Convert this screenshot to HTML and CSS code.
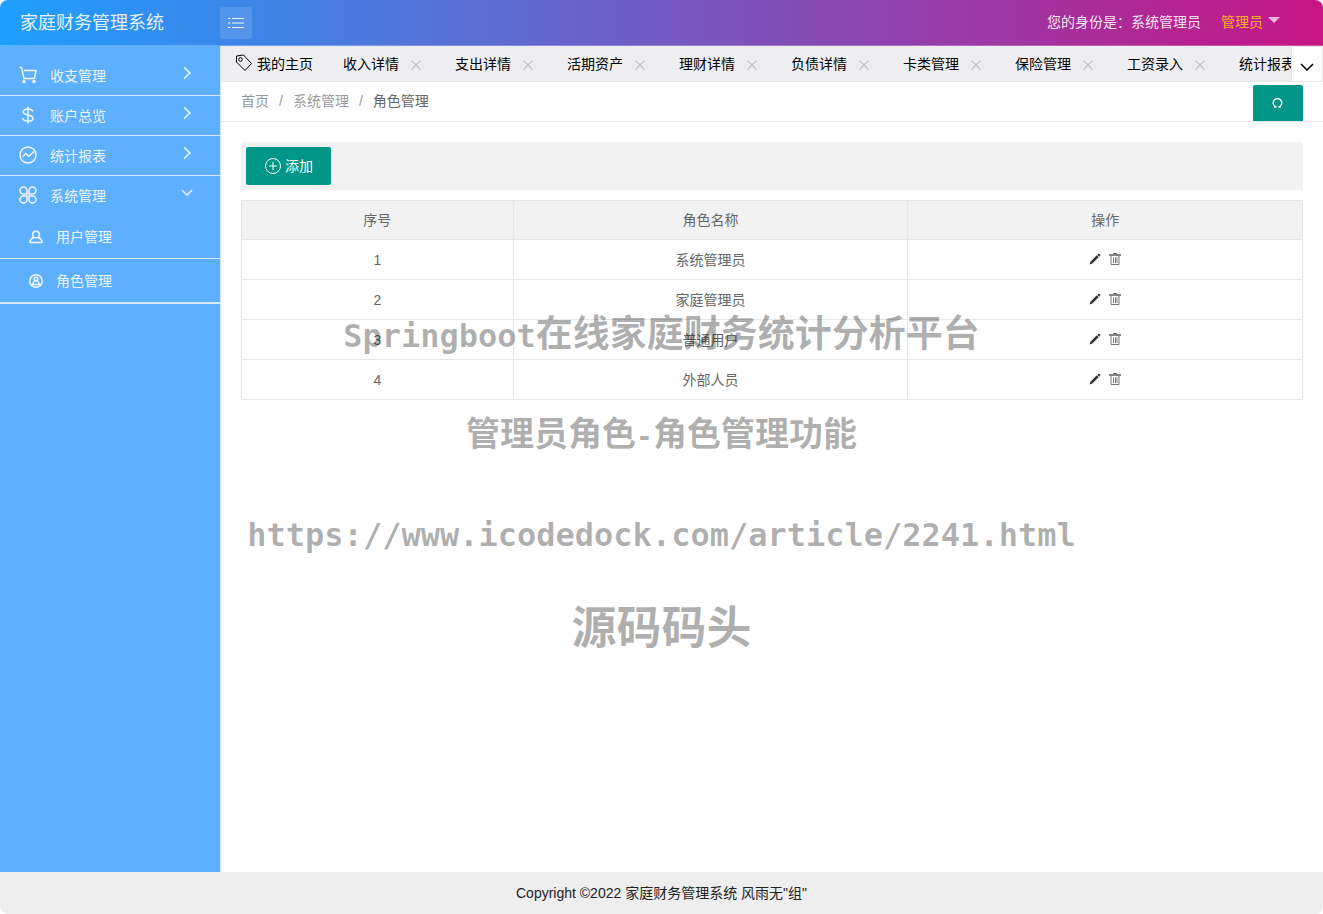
FILE: index.html
```html
<!DOCTYPE html>
<html lang="zh-CN">
<head>
<meta charset="utf-8">
<title>家庭财务管理系统</title>
<link rel="stylesheet" href="styles.css">
</head>
<body>
<svg class="sprite" aria-hidden="true">
  <symbol id="close" viewBox="0 0 10 10"><path d="M0.500 0.500l9 9M9.500 0.500l-9 9"/></symbol>
  <symbol id="right" viewBox="0 0 12 12"><path d="M3 0.500l6 5.500-6 5.500"/></symbol>
  <symbol id="down" viewBox="0 0 14 8"><path d="M1 1l6 6 6-6"/></symbol>
  <symbol id="pencil" viewBox="0 0 12 12"><path d="M0.500 11.500l1-2.800 6.300-6.400 1.900 1.900-6.400 6.300zM8.300 1.800l.9-.9q.6-.5 1.200 0l.7.7q.5.6 0 1.200l-.9.900z"/></symbol>
  <symbol id="trash" viewBox="0 0 12 12"><path d="M0 2h12" stroke-width="1.600"/><path d="M4 0.500h4M2 3v8.500h8V3M4.500 4.500V10M6.500 4.500V10M8 4.500V10" stroke-width=".9"/></symbol>
</svg>

<header class="header">
  <h1 class="brand">家庭财务管理系统</h1>
  <button class="toggle" type="button" aria-label="折叠菜单">
    <svg width="18" height="12" viewBox="0 0 18 12"><path d="M1 1.500h2.500M5 1.500h12M1 6h2.500M5 6h12M1 10.500h2.500M5 10.500h12"/></svg>
  </button>
  <div class="identity">您的身份是：系统管理员</div>
  <a class="account" href="#">管理员<span class="caret"></span></a>
</header>

<div class="body">
  <nav class="side">
    <a class="item" href="#">
      <svg class="item-icon" viewBox="0 0 18 18"><path d="M0.500 1.500h2l2.500 11h10.500M5 4.500H17l-1.500 8"/><circle cx="5" cy="15.500" r="1"/><circle cx="15" cy="15.500" r="1"/></svg>
      <span>收支管理</span><svg class="arrow"><use href="#right"/></svg>
    </a>
    <a class="item" href="#">
      <svg class="item-icon" viewBox="0 0 18 18"><path d="M14 5.500Q13 3 9 3T4.200 5.800Q4.200 8 9 9t5 3.400Q14 15 9 15t-5.200-3M9 0.500v17"/></svg>
      <span>账户总览</span><svg class="arrow"><use href="#right"/></svg>
    </a>
    <a class="item" href="#">
      <svg class="item-icon" viewBox="0 0 18 18"><circle cx="9" cy="9" r="8"/><path d="M3.500 11l3.300-3.500 3 3 5-5"/></svg>
      <span>统计报表</span><svg class="arrow"><use href="#right"/></svg>
    </a>
    <a class="item item-open" href="#">
      <svg class="item-icon" viewBox="0 0 18 18"><path d="M8 8H4.500A3.500 3.500 0 1 1 8 4.500zM10 8V4.500A3.500 3.500 0 1 1 13.500 8zM8 10v3.500A3.500 3.500 0 1 1 4.500 10zM10 10h3.500a3.500 3.500 0 1 1-3.500 3.500z"/></svg>
      <span>系统管理</span><svg class="arrow arrow-down"><use href="#down"/></svg>
    </a>
    <div class="sub">
      <a class="subitem" href="#">
        <svg class="sub-icon" viewBox="0 0 14 14"><circle cx="7" cy="4.500" r="3.300"/><path d="M5 7.200Q1 9 1 12.500h12Q13 9 9 7.200"/></svg>
        <span>用户管理</span>
      </a>
      <a class="subitem" href="#">
        <svg class="sub-icon" viewBox="0 0 14 14"><circle cx="7" cy="7" r="6.200"/><circle cx="7" cy="5" r="1.800"/><path d="M6 6.500Q4 8 3.800 10.500h6.400Q10 8 8 6.500"/></svg>
        <span>角色管理</span>
      </a>
    </div>
  </nav>

  <main class="main">
    <div class="tabs">
      <div class="tablist">
        <div class="tab tab-home">
          <svg class="tag" viewBox="0 0 18 18"><path d="M1.500 2L8.500 1l8 8.500-6.500 7L1.500 8z"/><circle cx="5.500" cy="5.500" r="1.800"/></svg>
          <a href="#">我的主页</a>
        </div>
        <div class="tab"><a href="#">收入详情</a><button class="close" type="button" aria-label="关闭"><svg><use href="#close"/></svg></button></div>
        <div class="tab"><a href="#">支出详情</a><button class="close" type="button" aria-label="关闭"><svg><use href="#close"/></svg></button></div>
        <div class="tab"><a href="#">活期资产</a><button class="close" type="button" aria-label="关闭"><svg><use href="#close"/></svg></button></div>
        <div class="tab"><a href="#">理财详情</a><button class="close" type="button" aria-label="关闭"><svg><use href="#close"/></svg></button></div>
        <div class="tab"><a href="#">负债详情</a><button class="close" type="button" aria-label="关闭"><svg><use href="#close"/></svg></button></div>
        <div class="tab"><a href="#">卡类管理</a><button class="close" type="button" aria-label="关闭"><svg><use href="#close"/></svg></button></div>
        <div class="tab"><a href="#">保险管理</a><button class="close" type="button" aria-label="关闭"><svg><use href="#close"/></svg></button></div>
        <div class="tab"><a href="#">工资录入</a><button class="close" type="button" aria-label="关闭"><svg><use href="#close"/></svg></button></div>
        <div class="tab"><a href="#">统计报表</a></div>
      </div>
      <button class="more" type="button" aria-label="更多标签"><svg><use href="#down"/></svg></button>
    </div>

    <div class="crumbbar">
      <nav class="crumbs">
        <a href="#">首页</a><span>/</span><a href="#">系统管理</a><span>/</span><span class="current">角色管理</span>
      </nav>
      <button class="refresh" type="button" aria-label="刷新">
        <svg width="12" height="10" viewBox="0 0 12 10"><path d="M2 9h2.500A4.300 4.300 0 1 1 6.500 9H9"/></svg>
      </button>
    </div>

    <section class="content">
      <div class="toolbar">
        <button class="add" type="button">
          <svg width="16" height="16" viewBox="0 0 16 16"><circle cx="8" cy="8" r="7.500"/><path d="M8 4v8M4 8h8"/></svg>
          <span>添加</span>
        </button>
      </div>
      <table class="roles">
        <thead><tr><th class="col-no">序号</th><th>角色名称</th><th>操作</th></tr></thead>
        <tbody>
          <tr><td>1</td><td>系统管理员</td><td><div class="ops"><button type="button" aria-label="编辑"><svg class="pencil"><use href="#pencil"/></svg></button><button type="button" aria-label="删除"><svg class="trash"><use href="#trash"/></svg></button></div></td></tr>
          <tr><td>2</td><td>家庭管理员</td><td><div class="ops"><button type="button" aria-label="编辑"><svg class="pencil"><use href="#pencil"/></svg></button><button type="button" aria-label="删除"><svg class="trash"><use href="#trash"/></svg></button></div></td></tr>
          <tr><td>3</td><td>普通用户</td><td><div class="ops"><button type="button" aria-label="编辑"><svg class="pencil"><use href="#pencil"/></svg></button><button type="button" aria-label="删除"><svg class="trash"><use href="#trash"/></svg></button></div></td></tr>
          <tr><td>4</td><td>外部人员</td><td><div class="ops"><button type="button" aria-label="编辑"><svg class="pencil"><use href="#pencil"/></svg></button><button type="button" aria-label="删除"><svg class="trash"><use href="#trash"/></svg></button></div></td></tr>
        </tbody>
      </table>
    </section>
  </main>
</div>

<footer class="footer">Copyright ©2022 家庭财务管理系统 风雨无"组"</footer>

<div class="watermark">
  <p class="mark-title"><span class="mono">Springboot</span>在线家庭财务统计分析平台</p>
  <p class="mark-page">管理员角色<span class="mono-small">-</span>角色管理功能</p>
  <p class="mark-url">https://www.icodedock.com/article/2241.html</p>
  <p class="mark-name">源码码头</p>
</div>
</body>
</html>
```
FILE: styles.css
```css
* { box-sizing: border-box; }

body {
  position: relative;
  display: flex;
  flex-direction: column;
  min-height: 100vh;
  margin: 0;
  background: #fff;
  color: #000;
  font: 14px/24px "Liberation Sans", "Noto Sans CJK SC", sans-serif;
}

a { color: inherit; text-decoration: none; }

button {
  margin: 0;
  padding: 0;
  border: 0;
  background: none;
  color: inherit;
  font: inherit;
  cursor: pointer;
}

svg { display: block; fill: none; stroke: currentColor; }

.sprite { position: absolute; width: 0; height: 0; }

/* Header */
.header {
  display: flex;
  align-items: center;
  height: 46px;
  border-bottom: 1px solid rgba(255, 255, 255, .25);
  border-radius: 8px 8px 0 0;
  background: linear-gradient(to right, #1e9fff, #c71585);
  color: rgba(255, 255, 255, .9);
}

.brand {
  width: 220px;
  margin: 0;
  padding-left: 20px;
  font-size: 18px;
  font-weight: 400;
  line-height: 42px;
}

.toggle {
  display: flex;
  align-items: center;
  justify-content: center;
  width: 32px;
  height: 32px;
  border-radius: 3px;
  background: rgba(255, 255, 255, .12);
}

.identity { margin-left: auto; padding-bottom: 2px; }

.account {
  display: flex;
  align-items: center;
  gap: 5px;
  margin: 0 43px 0 20px;
  padding-bottom: 2px;
  color: #ffb01e;
}

.caret {
  margin-bottom: 4px;
  border: 6px solid transparent;
  border-top-color: rgba(255, 255, 255, .7);
  border-bottom: 0;
}

/* Page body */
.body { display: flex; flex: 1; }

.side {
  flex: none;
  width: 221px;
  padding-top: 10px;
  border-right: 1px solid #cfe3f7;
  background: #5fafff;
  color: rgba(255, 255, 255, .9);
}

.item {
  display: flex;
  align-items: center;
  gap: 13px;
  height: 40px;
  padding: 0 27px 0 19px;
  border-bottom: 1px solid #d7eaff;
}

.item-open { border-bottom-color: transparent; }

.item-icon { width: 18px; height: 18px; margin-bottom: 2px; stroke-width: 1.5; }

.arrow { width: 12px; height: 12px; margin: 0 0 5px auto; stroke-width: 1.5; }

.arrow-down { height: 7px; margin-bottom: 7px; }

.sub { border-bottom: 1px solid #d7eaff; }

.subitem {
  display: flex;
  align-items: center;
  gap: 13px;
  height: 44px;
  padding-left: 29px;
  border-bottom: 1px solid #d7eaff;
}

.subitem:first-child { height: 43px; }

.sub-icon { width: 14px; height: 14px; stroke-width: 1.5; }

.main { flex: 1; min-width: 0; }

/* Tabs */
.tabs {
  display: flex;
  height: 36px;
  border-bottom: 1px solid #e6e6e6;
  background: #eeeef0;
}

.tablist { display: flex; flex: 1; min-width: 0; overflow: hidden; }

.tab {
  display: flex;
  flex: none;
  align-items: center;
  padding: 0 14px 0 15px;
}

.tab-home { padding: 0 15px 0 14px; }

.tab a { white-space: nowrap; }

.tag { width: 18px; height: 18px; margin: 0 4px 2px 0; stroke-width: 1; }

.close { width: 10px; margin: 2px 5px 0 12px; color: #c4c4c4; }

.close svg { width: 10px; height: 10px; stroke-width: 1.3; }

.more {
  display: flex;
  align-items: center;
  justify-content: center;
  width: 32px;
  padding-top: 6px;
  border: 1px solid #e6e6e6;
  border-bottom: 0;
  background: #fff;
}

.more svg { width: 14px; height: 8px; stroke-width: 1.5; }

/* Breadcrumb */
.crumbbar {
  display: flex;
  align-items: flex-end;
  justify-content: space-between;
  height: 40px;
  padding: 0 20px;
  border-bottom: 1px solid #e6e6e6;
}

.crumbs {
  display: flex;
  align-self: center;
  gap: 10px;
  padding-bottom: 2px;
  color: #999;
}

.crumbs .current { color: #666; }

.refresh {
  display: flex;
  align-items: center;
  justify-content: center;
  width: 50px;
  height: 36px;
  border-radius: 2px 2px 0 0;
  background: #009688;
  color: #fff;
  stroke-width: 1.3;
}

/* Content */
.content { padding: 20px; }

.toolbar {
  margin-bottom: 10px;
  padding: 5px;
  background: #f2f2f2;
}

.add {
  display: flex;
  align-items: center;
  gap: 4px;
  height: 38px;
  padding: 0 18px 0 19px;
  border-radius: 2px;
  background: #009688;
  color: #fff;
}

.roles {
  width: 100%;
  border-collapse: collapse;
  table-layout: fixed;
  color: #666;
  text-align: center;
}

.roles th,
.roles td {
  height: 40px;
  padding: 0;
  border: 1px solid #e6e6e6;
  font-weight: 400;
}

.roles th { height: 39px; background: #f2f2f2; }

.col-no { width: 25.6%; }

.ops { display: flex; justify-content: center; gap: 8px; padding-bottom: 1px; }

.ops svg { width: 12px; height: 12px; }

.pencil { fill: #333; stroke: none; }

.trash { stroke: #666; }

/* Footer */
.footer {
  height: 42px;
  border-radius: 0 0 8px 8px;
  background: #eee;
  color: #222;
  line-height: 42px;
  text-align: center;
}

/* Watermark */
.watermark {
  position: absolute;
  inset: 0;
  padding-top: 286px;
  overflow: hidden;
  color: rgba(0, 0, 0, .31);
  font-weight: 700;
  line-height: 98px;
  text-align: center;
  white-space: nowrap;
  pointer-events: none;
}

.watermark p { margin: 0; }

.mark-title { font-size: 37px; }

.mark-page { font-size: 34px; }

.mark-url,
.mono { font-family: "DejaVu Sans Mono", monospace; font-size: 32px; }

.mono-small { font-family: "DejaVu Sans Mono", monospace; font-size: 28px; }

.mark-name { font-size: 45px; line-height: 90px; }
```
